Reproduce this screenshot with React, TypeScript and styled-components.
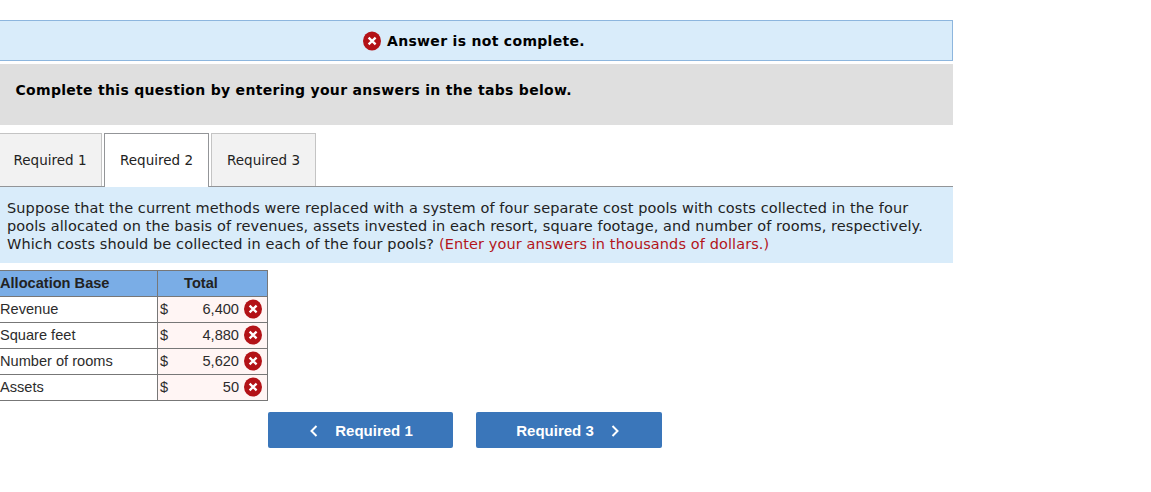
import styled, { createGlobalStyle, css } from 'styled-components'

const GlobalStyle = createGlobalStyle`
  * {
    box-sizing: border-box;
  }

  body {
    margin: 0;
    background: #fff;
    font-family: Verdana, 'DejaVu Sans', sans-serif;
    color: #000;
  }
`

const Page = styled.main`
  width: 953px;
  padding-top: 20px;
`

const Banner = styled.div`
  display: flex;
  align-items: center;
  justify-content: center;
  gap: 6px;
  height: 41px;
  padding-right: 4px;
  border: 1px solid #8db6de;
  border-left: none;
  background: #d9ecfa;
  font-size: 14px;
  font-weight: 700;
  letter-spacing: 0.31px;
`

const Instructions = styled.div`
  height: 61px;
  margin-top: 3px;
  padding: 16px 15.5px;
  background: #dfdfdf;
  font-size: 14px;
  font-weight: 700;
  line-height: 20px;
  letter-spacing: 0.3px;
`

const TabList = styled.div`
  display: flex;
  gap: 2px;
  height: 54px;
  margin-top: 8px;
  border-bottom: 1px solid #939598;
`

const Tab = styled.button<{ $active?: boolean; $first?: boolean }>`
  width: 105px;
  height: 53px;
  padding: 0;
  border: 1px solid #c4c4c4;
  border-bottom: none;
  background: #f2f2f2;
  font: 13.5px/18px 'DejaVu Sans', sans-serif;
  color: #222;

  ${({ $first }) =>
    $first &&
    css`
      width: 102px;
      padding-right: 1px;
      border-left: none;
    `}

  ${({ $active }) =>
    $active &&
    css`
      height: 54px;
      padding-bottom: 1px;
      border-color: #939598;
      background: #fff;
    `}
`

const Question = styled.div`
  height: 76px;
  padding: 12px 7px;
  background: #d9ecfa;
  font-size: 14.5px;
  line-height: 18px;
  letter-spacing: 0.097px;
  color: #222;
  white-space: nowrap;
`

const Note = styled.span`
  color: #b3151b;
`

const Table = styled.div`
  width: 268px;
  margin-top: 7px;
  border-top: 1px solid #777;
  font: 14.6px/24px 'Liberation Sans', Arial, sans-serif;
  color: #2c2c2c;
`

const Row = styled.div<{ $head?: boolean }>`
  display: grid;
  grid-template-rows: 25px;
  grid-template-columns: 157px 111px;
  border-bottom: 1px solid #777;

  ${({ $head }) =>
    $head &&
    css`
      background: #7aade6;
      font-weight: 700;
      color: #222;
    `}
`

const HeadCell = styled.div`
  padding-right: 23px;
  border: solid #777;
  border-width: 0 1px;
  text-align: center;
`

const AmountCell = styled.div`
  display: flex;
  align-items: flex-start;
  padding: 0 5px 0 2px;
  border: solid #777;
  border-width: 0 1px;
  background: #fff5f4;

  svg {
    margin-top: 2px;
  }
`

const Amount = styled.span`
  margin: 0 5px 0 auto;
`

const Pager = styled.div`
  display: flex;
  gap: 23px;
  margin: 11px 0 0 268px;
`

const PagerButton = styled.button<{ $next?: boolean }>`
  display: flex;
  align-items: center;
  justify-content: center;
  gap: 17px;
  width: ${({ $next }) => ($next ? '186px' : '185px')};
  height: 36px;
  padding: ${({ $next }) => ($next ? '1px 3px 0 0' : '1px 0 0 2px')};
  border: none;
  border-radius: 2px;
  background: #3a76ba;
  font: bold 15px/18px 'Liberation Sans', Arial, sans-serif;
  color: #fff;
`

const WrongIcon = () => (
  <svg width="18" height="20" viewBox="0 0 18 20" aria-hidden="true">
    <ellipse cx="9" cy="10" rx="9" ry="9.5" fill="#b31217" />
    <path d="M5.6 6.7 12.6 13.3M12.6 6.7 5.6 13.3" stroke="#fff" strokeWidth="2.3" />
  </svg>
)

const Chevron = ({ right }: { right?: boolean }) => (
  <svg width="8" height="12" viewBox="0 0 8 12" fill="none" aria-hidden="true">
    <path d={right ? 'M1.5 1 6.5 6 1.5 11' : 'M6.5 1 1.5 6 6.5 11'} stroke="#fff" strokeWidth="2" />
  </svg>
)

const allocations = [
  { base: 'Revenue', total: '6,400' },
  { base: 'Square feet', total: '4,880' },
  { base: 'Number of rooms', total: '5,620' },
  { base: 'Assets', total: '50' },
]

export default function App() {
  return (
    <>
      <GlobalStyle />
      <Page>
        <Banner>
          <WrongIcon />
          <span>Answer is not complete.</span>
        </Banner>
        <Instructions>
          Complete this question by entering your answers in the tabs below.
        </Instructions>
        <TabList>
          <Tab $first>Required 1</Tab>
          <Tab $active>Required 2</Tab>
          <Tab>Required 3</Tab>
        </TabList>
        <Question>
          Suppose that the current methods were replaced with a system of four separate cost pools with costs collected in the four
          <br />
          pools allocated on the basis of revenues, assets invested in each resort, square footage, and number of rooms, respectively.
          <br />
          Which costs should be collected in each of the four pools?{' '}
          <Note>(Enter your answers in thousands of dollars.)</Note>
        </Question>
        <Table>
          <Row $head>
            <div>Allocation Base</div>
            <HeadCell>Total</HeadCell>
          </Row>
          {allocations.map(({ base, total }) => (
            <Row key={base}>
              <div>{base}</div>
              <AmountCell>
                <span>$</span>
                <Amount>{total}</Amount>
                <WrongIcon />
              </AmountCell>
            </Row>
          ))}
        </Table>
        <Pager>
          <PagerButton>
            <Chevron />
            Required 1
          </PagerButton>
          <PagerButton $next>
            Required 3
            <Chevron right />
          </PagerButton>
        </Pager>
      </Page>
    </>
  )
}
